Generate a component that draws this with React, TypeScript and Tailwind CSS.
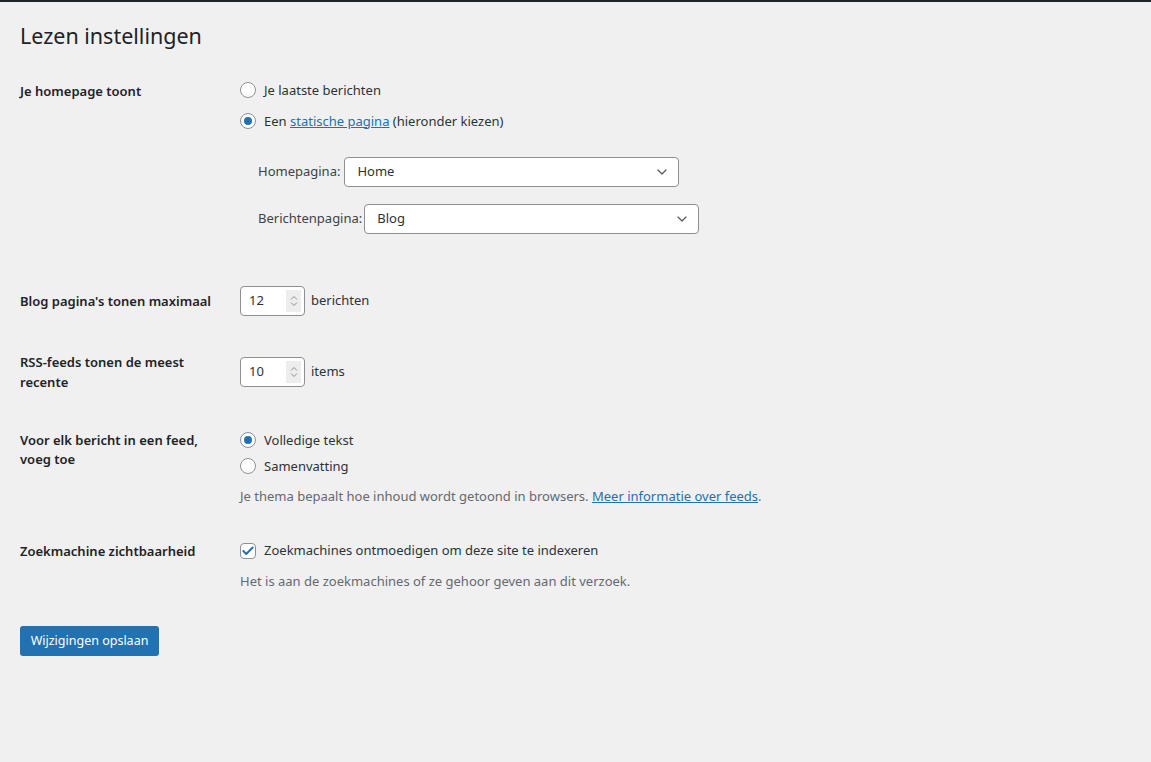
import { Check, ChevronDown } from "lucide-react";

// WordPress "Lezen instellingen" (Reading settings) screen.

const FONT = "font-['Noto_Sans','Open_Sans',sans-serif]";

function Radio({ checked, children }: { checked?: boolean; children: React.ReactNode }) {
  return (
    <label className="flex h-5 items-center gap-2">
      <span className="flex h-4 w-4 items-center justify-center rounded-full border border-[#8c8f94] bg-white">
        {checked && <span className="h-2 w-2 rounded-full bg-[#2271b1]" />}
      </span>
      <span className="pt-px">{children}</span>
    </label>
  );
}

function Select({ value, width }: { value: string; width: string }) {
  return (
    <div
      className={`flex h-[30px] items-center justify-between rounded-[4px] border border-[#8c8f94] bg-white pl-3 pr-2 ${width}`}
    >
      <span>{value}</span>
      <ChevronDown size={16} strokeWidth={1.8} className="text-[#50575e]" />
    </div>
  );
}

function NumberInput({ value }: { value: string }) {
  return (
    <div className="flex h-[30px] w-[65px] items-center justify-between rounded-[4px] border border-[#8c8f94] bg-white pl-2 pr-[3px]">
      <span>{value}</span>
      <span className="flex h-[22px] w-[15px] flex-col items-center justify-center bg-[#ededed] text-[#8c8f94]">
        <svg width="8" height="6" viewBox="0 0 8 6" fill="none" stroke="currentColor" strokeWidth="1">
          <path d="M1 4.5 L4 1.5 L7 4.5" />
        </svg>
        <svg width="8" height="6" viewBox="0 0 8 6" fill="none" stroke="currentColor" strokeWidth="1">
          <path d="M1 1.5 L4 4.5 L7 1.5" />
        </svg>
      </span>
    </div>
  );
}

function Row({
  label,
  className,
  labelClass,
  children,
}: {
  label: React.ReactNode;
  className?: string;
  labelClass?: string;
  children: React.ReactNode;
}) {
  return (
    <div className={`flex ${className ?? ""}`}>
      <div className={`w-[220px] shrink-0 pr-5 font-semibold leading-5 text-[#1d2327] ${labelClass ?? ""}`}>{label}</div>
      <div className="flex-1">{children}</div>
    </div>
  );
}

export default function App() {
  return (
    <div className={`min-h-[762px] w-full border-t-2 border-[#1d2327] bg-[#f0f0f1] text-[13px] text-[#2c3338] ${FONT}`}>
      <div className="px-5">
        <h1 className="pt-[19px] text-[21.5px] font-normal leading-[29px] text-[#1d2327]">Lezen instellingen</h1>

        <Row label="Je homepage toont" className="mt-[30px]" labelClass="pt-px">
          <div className="flex flex-col gap-[11px]">
            <Radio>Je laatste berichten</Radio>
            <Radio checked>
              Een{" "}
              <a className="text-[#2271b1] underline" href="#">
                statische pagina
              </a>{" "}
              (hieronder kiezen)
            </Radio>
          </div>
          <div className="ml-[18px] mt-[26px] flex flex-col gap-[17px]">
            <div className="flex items-center gap-[4px]">
              <span className="text-[#3c434a]">Homepagina:</span>
              <Select value="Home" width="w-[335px]" />
            </div>
            <div className="flex items-center gap-[2px]">
              <span className="text-[#3c434a]">Berichtenpagina:</span>
              <Select value="Blog" width="w-[335px]" />
            </div>
          </div>
        </Row>

        <Row label="Blog pagina's tonen maximaal" className="mt-[52px]" labelClass="pt-[5px]">
          <div className="flex items-center gap-[6px]">
            <NumberInput value="12" />
            <span>berichten</span>
          </div>
        </Row>

        <Row label="RSS-feeds tonen de meest recente" className="mt-[36px]">
          <div className="flex items-center gap-[6px] pt-[5px]">
            <NumberInput value="10" />
            <span>items</span>
          </div>
        </Row>

        <Row label="Voor elk bericht in een feed, voeg toe" className="mt-[38px]" labelClass="!leading-[19px] pt-px">
          <div className="flex flex-col gap-[6px]">
            <Radio checked>Volledige tekst</Radio>
            <Radio>Samenvatting</Radio>
          </div>
          <p className="mt-[10px] leading-5 text-[#646970]">
            Je thema bepaalt hoe inhoud wordt getoond in browsers.{" "}
            <a className="text-[#2271b1] underline" href="#">
              Meer informatie over feeds
            </a>
            .
          </p>
        </Row>

        <Row label="Zoekmachine zichtbaarheid" className="mt-[35px]">
          <label className="flex h-5 items-center gap-2">
            <span className="flex h-4 w-4 items-center justify-center rounded-[4px] border border-[#8c8f94] bg-white">
              <Check size={14} strokeWidth={3.5} className="text-[#2271b1]" />
            </span>
            <span>Zoekmachines ontmoedigen om deze site te indexeren</span>
          </label>
          <p className="mt-[10px] leading-5 text-[#646970]">Het is aan de zoekmachines of ze gehoor geven aan dit verzoek.</p>
        </Row>

        <button
          type="button"
          className="mt-[35px] h-[30px] w-[139px] rounded-[3px] bg-[#2271b1] text-[12.5px] text-white"
        >
          Wijzigingen opslaan
        </button>
      </div>
    </div>
  );
}
